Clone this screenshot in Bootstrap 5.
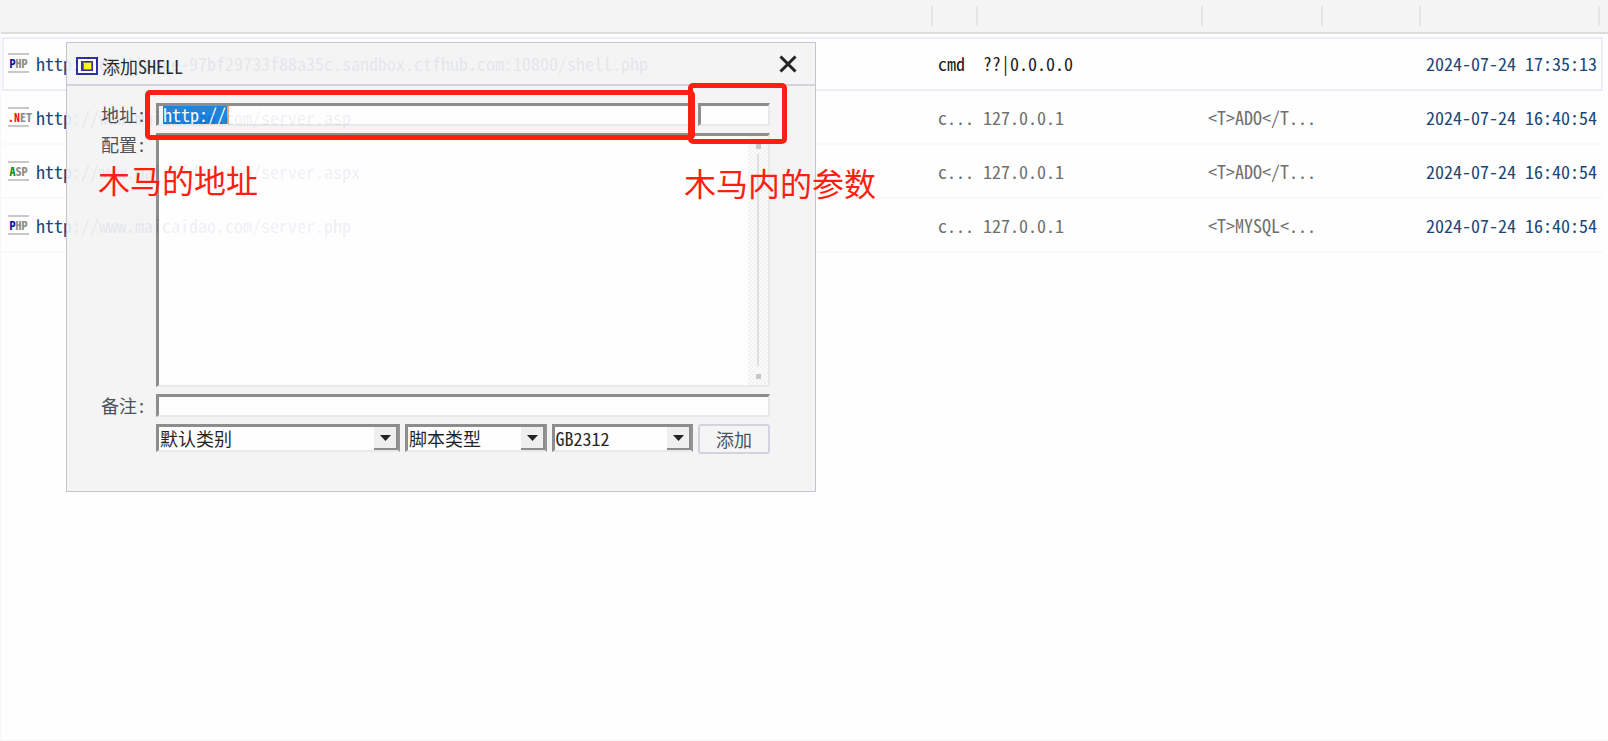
<!DOCTYPE html>
<html lang="zh-CN">
<head>
<meta charset="utf-8">
<meta name="viewport" content="width=device-width, initial-scale=1">
<title>添加SHELL</title>
<link href="https://cdn.jsdelivr.net/npm/bootstrap@5.3.0/dist/css/bootstrap.min.css" rel="stylesheet">
<style>
  :root { --ui: "Noto Sans Mono CJK SC", "Noto Sans CJK SC", monospace; --red: #ff1f12; }
  body { font-family: var(--ui); font-size: 18px; line-height: 24px; background: #fefefe; color: #1a1a1a; }
  .app-shell { border-left: 1px solid #f6f6f6; border-bottom: 1px solid #f6f6f6; }

  /* shell list */
  .head-strip { height: 34px; background: #f4f4f4; border-bottom: 2px solid #dcdcdc; }
  .list-frame { margin-top: 3px; padding: 0 5px 0 1px; }
  .shell-list { table-layout: fixed; border-collapse: separate; border-spacing: 0; width: 100%; }
  .shell-list td { height: 54px; padding: 0; border-bottom: 2px solid #f9f9f9; vertical-align: middle; white-space: nowrap; overflow: hidden; color: #6f6f6f; }
  .shell-list .picked td { border-top: 2px solid #ececfa; border-bottom-color: #ececfa; padding-bottom: 2px; color: #1a1a1a; }
  .shell-list .picked td:first-child { border-left: 2px solid #ececfa; }
  .shell-list .picked td:last-child { border-right: 2px solid #ececfa; }
  .shell-list td.link-cell, .shell-list td.time-cell { color: #1a4678; }
  .shell-list tr:not(.picked) .link-cell { padding-left: 2px; }
  .link-cell a { margin-left: 7px; color: inherit; text-decoration: none; font-weight: 500; }
  .time-cell { font-weight: 500; }
  .col-tag { width: 45px; } .col-ip { width: 225px; } .col-cfg { width: 120px; } .col-note { width: 98px; } .col-time { width: 177px; }
  .head-strip div { height: 20px; border-left: 2px solid #e4e4e4; }
  .head-strip .col-time { width: 181px; border-right: 2px solid #e4e4e4; }
  .lang { display: inline-block; width: 21px; height: 20px; border: solid #c8c8c8; border-width: 2px 0; font-size: 12px; line-height: 16px; font-weight: 700; color: #8c8c8c; text-align: center; }
  .c-navy { color: #10109a; } .c-red { color: #f01414; } .c-green { color: #148a14; }

  /* floating window */
  .win-wrap { position: absolute; left: 65px; top: 42px; width: 750px; }
  .win { opacity: .92; background: #f4f4f4; border: 1px solid #c0c0cc; height: 450px; }
  .win-title { height: 43px; border-bottom: 2px solid #d0d0dc; padding: 0 18px 0 9px; }
  .win-close { border: 0; background: none; padding: 0; line-height: 0; }
  .win-form { padding: 17px 45px 0 34px; gap: 7px; color: #3a4450; }
  .lbl { width: 55px; height: 22px; line-height: 22px; flex: none; white-space: nowrap; }
  .sunk { display: block; background: #fff; border: 2px solid; border-width: 3px 2px 2px 3px; border-color: #848484 #e8e8e8 #e8e8e8 #848484; border-radius: 0; outline: 0; padding: 0; color: #111; min-width: 0; }
  .line-box { height: 23px; line-height: 18px; }
  .addr-box { color: #fff; padding: 0 0 2px 4px; background: linear-gradient(90deg, #0a7bdc 64px, #e8a070 64px, #e8a070 66px, #fff 66px) 4px 0 no-repeat; }
  .conf-box { height: 254px; resize: none; overflow: hidden; width: 100%; }
  .side-w { width: 72px; flex: none; }
  .rail { position: absolute; top: 3px; right: 2px; bottom: 2px; width: 20px; background: repeating-conic-gradient(#f2f2f2 0 25%, #fbfbfb 0 50%) 0 0 / 4px 4px; padding: 8px 0 6px; }
  .rail i { width: 5px; height: 5px; background: #c4c4c4; }
  .rail b { width: 2px; background: #dcdcdc; margin: 5px 0 8px; }
  .pick-row { gap: 5px; }
  .drop { height: 28px; appearance: none; flex: 1 1 0; padding: 0 28px 2px 1px; border-right-color: #8c8c8c; line-height: 20px;
    background: #fff url("data:image/svg+xml,%3Csvg xmlns='http://www.w3.org/2000/svg' width='24' height='23'%3E%3Cpath fill='%23eeeeee' d='M0 0h24v23H0z'/%3E%3Cpath fill='%23848484' d='M22 0h2v23H0v-2h22z'/%3E%3Cpath fill='%23111' d='M6 8h11l-5.500 6z'/%3E%3C/svg%3E") right top no-repeat; }
  .drop-wide { flex: none; width: 244px; }
  .add-btn { height: 30px; background: #f5f5f5; border: 2px solid #d0d0dc; border-radius: 3px; color: #3a4450; padding: 0; }

  /* red callouts drawn over the window */
  .callout { position: absolute; border: 5px solid var(--red); border-radius: 5px; pointer-events: none; }
  .callout-addr { left: 79px; top: 48px; width: 550px; height: 50px; }
  .callout-pass { left: 622px; top: 41px; width: 99px; height: 61px; }
  .note-txt { position: absolute; color: var(--red); font: 400 32px/40px "Noto Sans CJK SC", sans-serif; white-space: nowrap; }
  .note-addr { left: 32px; top: 117px; }
  .note-pass { left: 618px; top: 120px; }
</style>
</head>
<body>
<div class="app-shell min-vh-100 position-relative">
  <div class="head-strip d-flex justify-content-end align-items-center pe-1">
    <div class="col-tag"></div><div class="col-ip"></div><div class="col-cfg"></div><div class="col-note"></div><div class="col-time me-1"></div>
  </div>
  <main class="list-frame">
    <table class="shell-list">
      <colgroup><col><col class="col-tag"><col class="col-ip"><col class="col-cfg"><col class="col-note"><col class="col-time"></colgroup>
      <tbody>
        <tr class="picked"><td class="link-cell"><div class="d-flex align-items-center ps-1"><span class="lang"><span class="c-navy">P</span>HP</span><a href="#">http://challenge-97bf29733f88a35c.sandbox.ctfhub.com:10800/shell.php</a></div></td><td>cmd</td><td>??|0.0.0.0</td><td></td><td></td><td class="time-cell">2024-07-24 17:35:13</td></tr>
        <tr><td class="link-cell"><div class="d-flex align-items-center ps-1"><span class="lang"><span class="c-red">.N</span>ET</span><a href="#">http://www.maicaidao.com/server.asp</a></div></td><td>c...</td><td>127.0.0.1</td><td>&lt;T&gt;ADO&lt;/T...</td><td></td><td class="time-cell">2024-07-24 16:40:54</td></tr>
        <tr><td class="link-cell"><div class="d-flex align-items-center ps-1"><span class="lang"><span class="c-green">A</span>SP</span><a href="#">http://www.maicaidao.com/server.aspx</a></div></td><td>c...</td><td>127.0.0.1</td><td>&lt;T&gt;ADO&lt;/T...</td><td></td><td class="time-cell">2024-07-24 16:40:54</td></tr>
        <tr><td class="link-cell"><div class="d-flex align-items-center ps-1"><span class="lang"><span class="c-navy">P</span>HP</span><a href="#">http://www.maicaidao.com/server.php</a></div></td><td>c...</td><td>127.0.0.1</td><td>&lt;T&gt;MYSQL&lt;...</td><td></td><td class="time-cell">2024-07-24 16:40:54</td></tr>
      </tbody>
    </table>
  </main>

  <section class="win-wrap">
    <div class="win">
      <header class="win-title d-flex align-items-center justify-content-between">
        <div class="d-flex align-items-center gap-1 pt-1">
          <svg width="22" height="18" viewBox="0 0 22 18" aria-hidden="true"><path fill="#fff" stroke="#20209a" stroke-width="2" d="M1 1h20v16H1z"/><path fill="#20209a" d="M5 4h12v10H5z"/><path fill="#ff0" stroke="#77752a" d="M7.500 5.500h8v7h-8z"/></svg>
          <span>添加SHELL</span>
        </div>
        <button class="win-close" type="button" aria-label="关闭"><svg width="18" height="18" viewBox="0 0 18 18"><path d="M1.500 1.500l15 15m0-15l-15 15" stroke="#111" stroke-width="3" fill="none"/></svg></button>
      </header>
      <form class="win-form d-flex flex-column">
        <div class="d-flex"><label class="lbl" for="addr">地址:</label>
          <div class="d-flex flex-grow-1"><input id="addr" class="sunk line-box addr-box flex-grow-1 me-2" type="text" value="http://"><input class="sunk line-box side-w" type="text" aria-label="参数"></div></div>
        <div class="d-flex"><label class="lbl" for="conf">配置:</label>
          <div class="flex-grow-1 position-relative"><textarea id="conf" class="sunk conf-box"></textarea><div class="rail d-flex flex-column align-items-center"><i></i><b class="flex-grow-1"></b><i></i></div></div></div>
        <div class="d-flex"><label class="lbl" for="memo">备注:</label><input id="memo" class="sunk line-box flex-grow-1" type="text"></div>
        <div class="d-flex"><span class="lbl"></span>
          <div class="pick-row d-flex flex-grow-1">
            <select class="sunk drop drop-wide" aria-label="类别"><option>默认类别</option></select>
            <select class="sunk drop" aria-label="脚本类型"><option>脚本类型</option></select>
            <select class="sunk drop" aria-label="编码"><option>GB2312</option></select>
            <button class="add-btn side-w" type="button">添加</button>
          </div></div>
      </form>
    </div>
    <div class="callout callout-addr"></div>
    <div class="callout callout-pass"></div>
    <div class="note-txt note-addr">木马的地址</div>
    <div class="note-txt note-pass">木马内的参数</div>
  </section>
</div>
<script src="https://cdn.jsdelivr.net/npm/bootstrap@5.3.0/dist/js/bootstrap.bundle.min.js"></script>
</body>
</html>
